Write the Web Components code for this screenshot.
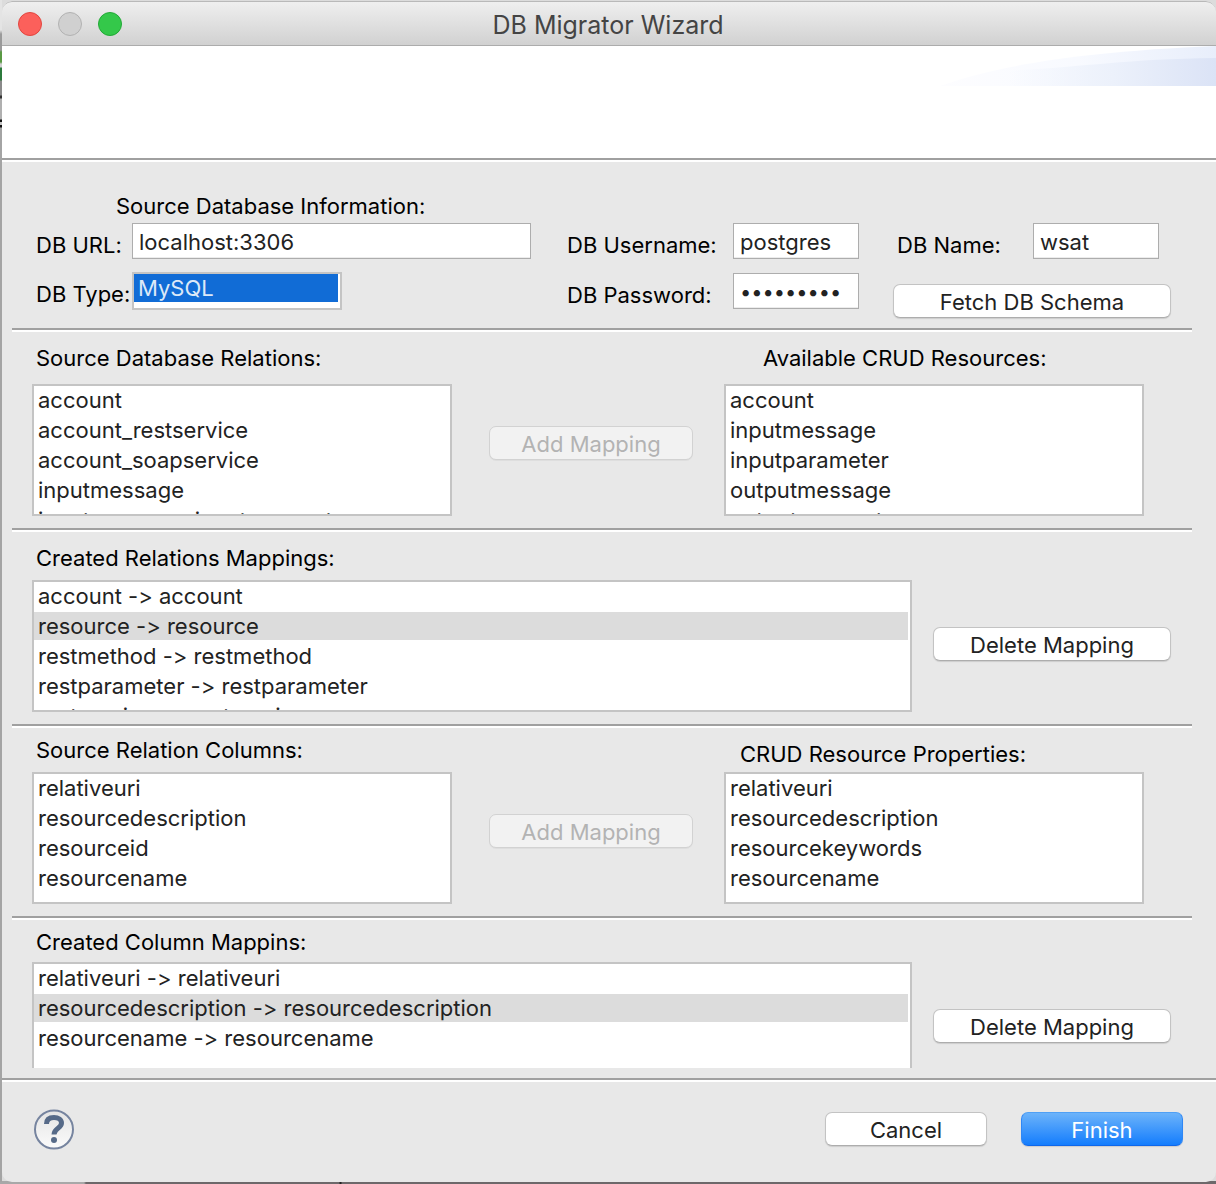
<!DOCTYPE html>
<html lang="en">
<head>
<meta charset="utf-8">
<title>DB Migrator Wizard</title>
<style>
  html, body { height: 100%; margin: 0; }
  body {
    box-sizing: border-box;
    padding: 1px 0 2px 2px;
    overflow: hidden;
    font: 22px/28px Inter, "Liberation Sans", sans-serif;
    font-feature-settings: "calt" 0;
    color: #000;
    background:
      linear-gradient(#e4e4e4 0 30px, #9a9a9a 34px 50px, #5a9a44 52px 62px, #d0d0d0 64px 67px, #2c7a3c 68px 80px, #8a8a8a 81px 95px, #333 96px 98px, #b0b0b0 99px 119px, #111 120px 122px, #c4c4c4 122px 125px, #111 125px 127px, #a4a4a4 128px) 0 0 / 2px calc(100% - 2px) no-repeat,
      linear-gradient(90deg, #a8a8a8 0 84px, #6d686a 86px 339px, #222 340px 341px, #6d686a 342px) 0 100% / 100% 3px no-repeat,
      #dcdcdc;
  }
</style>
</head>
<body>
<wizard-window heading="DB Migrator Wizard">
  <wizard-section style="--pad-top:30px; --pad-bottom:10px">
    <connection-form></connection-form>
  </wizard-section>
  <wizard-section>
    <mapping-picker>
      <list-box slot="source" label="Source Database Relations:" items="account|account_restservice|account_soapservice|inputmessage|inputmessage_inputparameter" style="--caption-gap:12px"></list-box>
      <push-button disabled>Add Mapping</push-button>
      <list-box slot="target" label="Available CRUD Resources:" items="account|inputmessage|inputparameter|outputmessage|outputparameter" style="--caption-gap:12px; --caption-indent:35px"></list-box>
    </mapping-picker>
  </wizard-section>
  <wizard-section>
    <mapping-result>
      <list-box label="Created Relations Mappings:" items="account -&gt; account|resource -&gt; resource|restmethod -&gt; restmethod|restparameter -&gt; restparameter|restservice -&gt; restservice" selected="1"></list-box>
      <push-button slot="action">Delete Mapping</push-button>
    </mapping-result>
  </wizard-section>
  <wizard-section style="--pad-top:8px">
    <mapping-picker>
      <list-box slot="source" label="Source Relation Columns:" items="relativeuri|resourcedescription|resourceid|resourcename"></list-box>
      <push-button disabled>Add Mapping</push-button>
      <list-box slot="target" label="CRUD Resource Properties:" items="relativeuri|resourcedescription|resourcekeywords|resourcename" style="--caption-gap:4px; --caption-indent:12px"></list-box>
    </mapping-picker>
  </wizard-section>
  <wizard-section style="--pad-top:8px">
    <mapping-result>
      <list-box label="Created Column Mappins:" items="relativeuri -&gt; relativeuri|resourcedescription -&gt; resourcedescription|resourcename -&gt; resourcename" selected="1" style="--caption-gap:6px"></list-box>
      <push-button slot="action">Delete Mapping</push-button>
    </mapping-result>
  </wizard-section>
  <help-button slot="help"></help-button>
  <push-button slot="actions" style="--width:162px">Cancel</push-button>
  <push-button slot="actions" primary style="--width:162px">Finish</push-button>
</wizard-window>

<script>
const define = (name, html, setup) => customElements.define(name, class extends HTMLElement {
  connectedCallback() {
    if (this.shadowRoot) return;
    const root = this.attachShadow({ mode: 'open' });
    const tpl = document.createElement('template');
    tpl.innerHTML = html;
    root.append(tpl.content.cloneNode(true));
    if (setup) setup(this, root);
  }
});

define('push-button', `
<style>
  :host { display: block; width: var(--width, auto); }
  button {
    display: block; box-sizing: border-box; width: 100%; height: 34px; margin: 0; padding: 2px 0 0;
    border: 1px solid #c3c3c3; border-bottom-color: #adadad; border-radius: 7px;
    background: #fff; color: #222; font: inherit; line-height: 28px;
    box-shadow: 0 1px 1px rgba(0,0,0,.12);
  }
  button:disabled { background: #f2f2f2; border-color: #d2d2d2; color: #b3b3b3; box-shadow: 0 1px 0 rgba(0,0,0,.04); }
  button.primary { background: linear-gradient(#6cb3fa, #147dfd); border-color: #4fa0f5 #2f87f5 #0f67ea; color: #fff; }
</style>
<button type="button"><slot></slot></button>`, (host, root) => {
  const b = root.querySelector('button');
  b.disabled = host.hasAttribute('disabled');
  b.classList.toggle('primary', host.hasAttribute('primary'));
});

define('text-field', `
<style>
  :host { display: flex; align-items: flex-start; }
  label { flex: none; width: var(--label-width); padding-top: 8px; white-space: nowrap; }
  input {
    flex: 1; min-width: 0; width: 0; height: 36px; box-sizing: border-box; margin: 0; padding: 2px 6px 0;
    border: 1px solid #adadad; border-radius: 0; background: #fff; color: #222; font: inherit;
    outline: none; box-shadow: inset 0 -1px #ececec;
  }
  input[type=password] { font-size: 20px; }
</style>
<label for="f"></label><input id="f">`, (host, root) => {
  root.querySelector('label').textContent = host.getAttribute('label');
  const i = root.querySelector('input');
  i.type = host.getAttribute('type') || 'text';
  i.value = host.getAttribute('value');
});

define('list-box', `
<style>
  :host { display: block; }
  label { display: block; padding-left: calc(4px + var(--caption-indent, 0px)); margin-bottom: var(--caption-gap, 8px); white-space: nowrap; }
  select {
    display: block; box-sizing: border-box; width: 100%; height: 132px; margin: 0; padding: 0;
    border: 2px solid #c4c4c4; border-radius: 0; background: #fff; color: #222; font: inherit;
    font-feature-settings: "calt" 0;
    overflow: hidden; scrollbar-width: none; outline: none;
  }
  option { height: 28px; min-height: 28px; line-height: 28px; padding: 1px 4px; box-sizing: content-box; }
  option:checked {
    background: linear-gradient(#dcdcdc, #dcdcdc) 0 0 / calc(100% - 2px) 28px no-repeat, linear-gradient(#fff, #fff);
    -webkit-text-fill-color: #222;
  }
  :host([inline]) { display: flex; align-items: flex-start; }
  :host([inline]) label { flex: none; width: var(--label-width); padding: 8px 0 0; margin: 0; }
  :host([inline]) select { width: 210px; height: 38px; }
  :host([inline]) option:checked {
    background: linear-gradient(#116cd6, #116cd6) 0 0 / calc(100% - 2px) 28px no-repeat, linear-gradient(#fff, #fff);
    -webkit-text-fill-color: #dce9f8;
  }
</style>
<label for="l"></label><select id="l" size="4"></select>`, (host, root) => {
  root.querySelector('label').textContent = host.getAttribute('label');
  const s = root.querySelector('select');
  const sel = host.getAttribute('selected');
  host.getAttribute('items').split('|').forEach((t, n) => {
    const o = document.createElement('option');
    o.textContent = t;
    if (sel !== null && +sel === n) { o.defaultSelected = true; o.selected = true; }
    s.append(o);
  });
});

define('connection-form', `
<style>
  :host { display: block; padding: 0 45px 0 34px; }
  h2 { margin: 0 0 3px; padding-left: 80px; font: inherit; }
  .cols { display: flex; align-items: flex-start; }
  .col { display: flex; flex-direction: column; min-width: 0; }
  .a { flex: 495; gap: 13px; --label-width: 96px; }
  .b { flex: 292; gap: 14px; margin: 0 34px 0 36px; --label-width: 166px; }
  .c { flex: 278; gap: 25px; --label-width: 136px; }
  .c text-field { margin: 0 12px 0 4px; }
</style>
<h2>Source Database Information:</h2>
<div class="cols">
  <div class="col a">
    <text-field label="DB URL:" value="localhost:3306"></text-field>
    <list-box inline label="DB Type:" items="MySQL" selected="0"></list-box>
  </div>
  <div class="col b">
    <text-field label="DB Username:" value="postgres"></text-field>
    <text-field label="DB Password:" type="password" value="postgres1"></text-field>
  </div>
  <div class="col c">
    <text-field label="DB Name:" value="wsat"></text-field>
    <push-button>Fetch DB Schema</push-button>
  </div>
</div>`);

define('mapping-picker', `
<style>
  :host { display: grid; grid-template-columns: 420fr 272fr 420fr; align-items: end; padding: 0 72px 0 30px; }
  .mid { align-self: end; padding: 0 31px 56px 37px; }
</style>
<slot name="source"></slot><div class="mid"><slot></slot></div><slot name="target"></slot>`);

define('mapping-result', `
<style>
  :host { display: flex; align-items: flex-end; gap: 21px; padding: 0 45px 0 30px; }
  .list { flex: 880; min-width: 0; }
  .action { flex: 238; padding-bottom: 51px; }
</style>
<div class="list"><slot></slot></div><div class="action"><slot name="action"></slot></div>`);

define('wizard-section', `
<style>
  :host { display: block; }
  .body { padding: var(--pad-top, 12px) 0 var(--pad-bottom, 12px); }
  hr { height: 2px; margin: 0 24px 0 10px; border: 0; background: #a0a0a0; border-bottom: 2px solid #fff; }
</style>
<div class="body"><slot></slot></div><hr>`);

define('help-button', `
<style>
  :host { display: block; }
  button { display: block; padding: 0; border: 0; background: none; }
  svg { display: block; }
</style>
<button type="button" aria-label="Help">
<svg width="40" height="42" viewBox="0 -1 40 42">
  <defs><linearGradient id="g" x2="0" y2="1"><stop offset="0" stop-color="#e4e4e4"/><stop offset="1" stop-color="#fbfbfb"/></linearGradient></defs>
  <circle cx="20" cy="20.500" r="19" fill="url(#g)" stroke="#76849f" stroke-width="2"/>
  <path d="M12.500 15C12.500 10 16 8.500 20 8.500c4.500 0 7.500 2 7.500 5.500 0 5.500-7.500 5-7.500 11.500" fill="none" stroke="#566a88" stroke-width="5"/>
  <circle cx="20" cy="31" r="3" fill="#566a88"/>
</svg></button>`);

define('wizard-window', `
<style>
  :host {
    display: flex; flex-direction: column; box-sizing: border-box; height: 100%;
    border-radius: 10px; background: #e8e8e8; overflow: hidden;
  }
  header {
    flex: none; display: grid; grid-template-columns: 1fr auto 1fr; align-items: center;
    height: 45px; box-sizing: border-box; padding: 1px 18px 0 16px;
    background: linear-gradient(#efefef, #d1d1d1);
    border-top: 1px solid #b9b9b9; border-bottom: 1px solid #acacac; border-radius: 10px 10px 0 0;
  }
  .lights { display: flex; gap: 16px; }
  .lights button { width: 24px; height: 24px; padding: 0; border-radius: 50%; border: 1px solid; }
  .close { background: #fc605b; border-color: #e2463f !important; }
  .min { background: #d0d0d0; border-color: #b2b2b2 !important; }
  .zoom { background: #34c84a; border-color: #22a936 !important; }
  h1 { margin: 0; padding-top: 2px; font: inherit; font-size: 25px; line-height: 32px; color: #444; }
  .banner { flex: none; height: 112px; background: #fff; }
  .banner svg { display: block; margin-left: auto; }
  .rule { flex: none; height: 2px; background: #a0a0a0; border-bottom: 2px solid #fff; }
  main { flex: 1; min-height: 0; overflow: hidden; margin-bottom: 10px; }
  footer { flex: none; display: flex; align-items: center; gap: 34px; height: 100px; box-sizing: border-box; padding: 0 33px 6px 32px; }
  .grow { flex: 1; }
</style>
<header>
  <div class="lights">
    <button class="close" type="button" aria-label="Close"></button>
    <button class="min" type="button" aria-label="Minimize" disabled></button>
    <button class="zoom" type="button" aria-label="Zoom"></button>
  </div>
  <h1></h1><span></span>
</header>
<div class="banner">
  <svg width="276" height="40" viewBox="0 0 276 40">
    <defs>
      <linearGradient id="a"><stop offset="0" stop-color="#fdfdff"/><stop offset=".5" stop-color="#f8faff"/><stop offset="1" stop-color="#e8eefb"/></linearGradient>
      <linearGradient id="b" gradientUnits="userSpaceOnUse" x1="70" x2="276"><stop offset="0" stop-color="#eef3fc" stop-opacity="0"/><stop offset=".5" stop-color="#ecf1fb"/><stop offset="1" stop-color="#dbe3f6"/></linearGradient>
    </defs>
    <path d="M0 40C50 22 130 6 276 0V40Z" fill="url(#a)"/>
    <path d="M60 25C140 22 180 13 276 12V40H60Z" fill="url(#b)"/>
  </svg>
</div>
<div class="rule"></div>
<main><slot></slot></main>
<div class="rule"></div>
<footer><slot name="help"></slot><div class="grow"></div><slot name="actions"></slot></footer>`, (host, root) => {
  root.querySelector('h1').textContent = host.getAttribute('heading');
});
</script>
</body>
</html>
